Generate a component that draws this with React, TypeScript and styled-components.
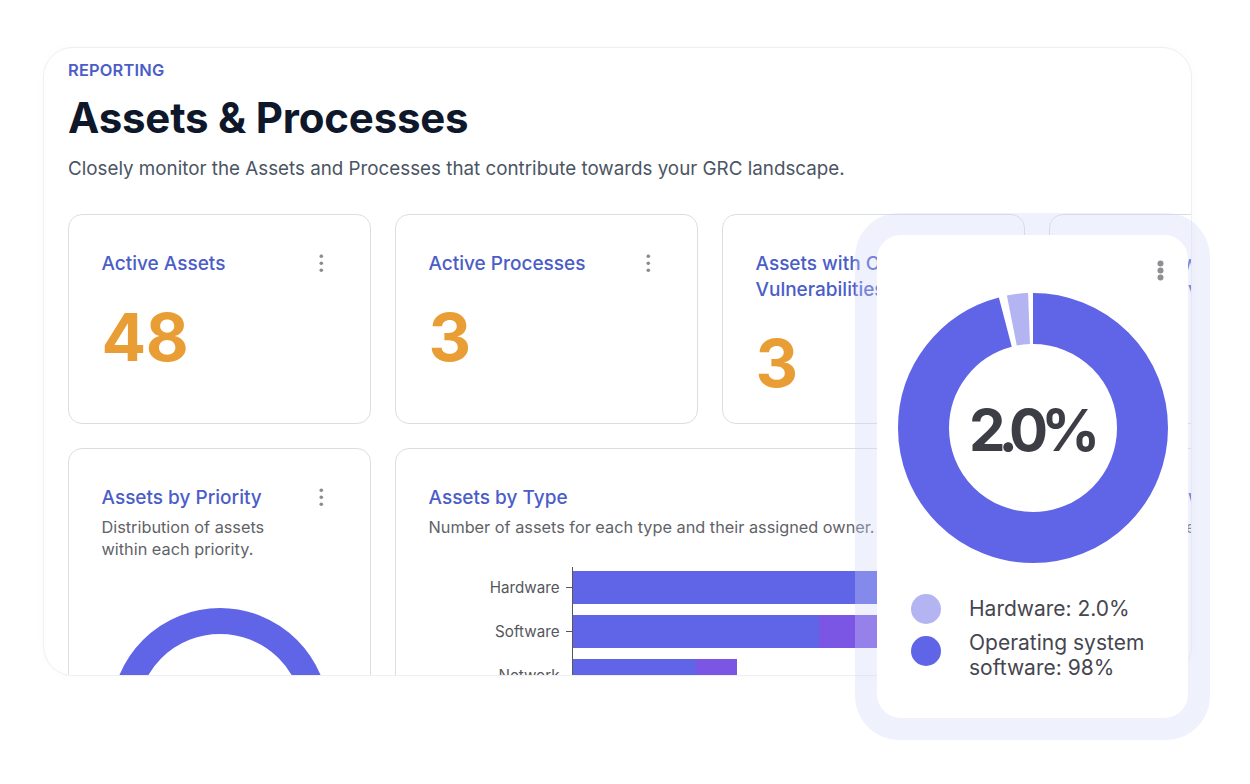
import React from "react";
import styled, { createGlobalStyle } from "styled-components";

const GlobalStyle = createGlobalStyle`
  html, body {
    margin: 0;
    padding: 0;
    background: #fff;
  }
  body {
    font-family: Inter, "Noto Sans", "Liberation Sans", sans-serif;
    -webkit-font-smoothing: antialiased;
  }
  * {
    box-sizing: border-box;
  }
`;

const INDIGO = "#6064e6";
const PURPLE = "#7b55e3";
const LIGHT = "#b3b4f1";

const Stage = styled.div`
  position: relative;
  width: 1250px;
  height: 784px;
  padding: 47px 0 0 43px;
  overflow: hidden;
`;

const Panel = styled.section`
  width: 1149px;
  height: 629px;
  border: 1px solid #efeff2;
  border-radius: 30px;
  background: #fff;
  box-shadow: 0 0 10px rgba(15, 23, 42, 0.025);
  padding: 12px 0 0 24px;
  overflow: hidden;
`;

const Eyebrow = styled.div`
  font-size: 16.4px;
  font-weight: 600;
  line-height: 20px;
  color: #4b5dc8;
  letter-spacing: 0.2px;
`;

const Heading = styled.h1`
  margin: 13px 0 0;
  font-size: 42px;
  font-weight: 700;
  line-height: 50px;
  color: #0f172a;
  letter-spacing: -0.2px;
`;

const Lead = styled.p`
  margin: 13px 0 0;
  font-size: 18.8px;
  line-height: 26px;
  color: #4b5563;
`;

const CardRow = styled.div<{ $top: number }>`
  display: flex;
  gap: 24px;
  margin-top: ${(p) => p.$top}px;
`;

const Card = styled.div<{ $w: number; $h: number }>`
  flex: 0 0 ${(p) => p.$w}px;
  min-width: 0;
  height: ${(p) => p.$h}px;
  border: 1.5px solid #dcdde1;
  border-radius: 14px;
  background: #fff;
  padding: 36px 46px 0 32.5px;
`;

const CardHead = styled.div`
  display: flex;
  justify-content: space-between;
  align-items: flex-start;
`;

const CardTitle = styled.h3`
  margin: 0;
  max-width: 200px;
  font-size: 19px;
  font-weight: 500;
  line-height: 26px;
  color: #4b5dc8;
`;

const Big = styled.div`
  margin-top: 27px;
  font-size: 66px;
  font-weight: 700;
  line-height: 66px;
  color: #e99d35;
  letter-spacing: -0.5px;
`;

const Desc = styled.p<{ $max?: number }>`
  margin: 5px 0 0;
  max-width: ${(p) => (p.$max ? `${p.$max}px` : "none")};
  font-size: 16.3px;
  line-height: 22px;
  color: #5f6368;
  white-space: ${(p) => (p.$max ? "normal" : "nowrap")};
`;

const DotsSvg = styled.svg`
  flex: 0 0 auto;
  display: block;
`;

function Kebab({ size = 1.8, gap = 7, color = "#8a8a8f", top = 3 }) {
  const w = size * 2 + 1;
  const h = gap * 2 + size * 2 + 1;
  return (
    <DotsSvg width={w} height={h} style={{ marginTop: top }} viewBox={`0 0 ${w} ${h}`}>
      {[0, 1, 2].map((i) => (
        <circle key={i} cx={w / 2} cy={size + 0.5 + i * gap} r={size} fill={color} />
      ))}
    </DotsSvg>
  );
}

const RingSvg = styled.svg`
  display: block;
  margin: 47px 0 0 8px;
  overflow: visible;
`;

/* bar chart */
const Chart = styled.div`
  margin-top: 29px;
  display: flex;
`;

const LabelCol = styled.div`
  flex: 0 0 143px;
  padding-top: 4px;
`;

const LabelRow = styled.div`
  height: 33px;
  margin-bottom: 11px;
  display: flex;
  justify-content: flex-end;
  align-items: center;
  gap: 6px;
  font-size: 15.2px;
  color: #55575c;
`;

const Tick = styled.span`
  width: 6px;
  height: 1.5px;
  background: #55575c;
`;

const BarCol = styled.div`
  flex: 1 0 auto;
  border-left: 1.5px solid #55575c;
  padding-top: 4px;
  height: 200px;
`;

const BarRow = styled.div`
  height: 33px;
  margin-bottom: 11px;
  display: flex;
`;

const Seg = styled.div<{ $c: string }>`
  flex: 0 0 auto;
  height: 100%;
  background: ${(p) => p.$c};
`;

/* popup over the page */
const Halo = styled.div`
  position: absolute;
  left: 855px;
  top: 213px;
  width: 355px;
  height: 527px;
  padding: 22px;
  border-radius: 44px;
  background: rgba(205, 215, 250, 0.33);
`;

const Popup = styled.div`
  height: 100%;
  background: #fff;
  border-radius: 24px;
  padding-top: 25px;
  display: flex;
  flex-direction: column;
`;

const PopupBar = styled.div`
  display: flex;
  justify-content: flex-end;
  padding-right: 24px;
`;

const DonutSvg = styled.svg`
  display: block;
  align-self: center;
  margin-top: 12px;
`;

const CenterText = styled.text`
  font-size: 58px;
  font-weight: 700;
  letter-spacing: -7px;
  fill: #3d3d46;
`;

const Legend = styled.div`
  margin-top: 33px;
  padding-left: 34px;
  display: flex;
  flex-direction: column;
  gap: 6px;
`;

const LegendItem = styled.div`
  display: flex;
  align-items: flex-start;
  gap: 28px;
`;

const LegendDot = styled.span<{ $c: string; $dy: number }>`
  flex: 0 0 30px;
  height: 30px;
  margin-top: ${(p) => p.$dy}px;
  border-radius: 50%;
  background: ${(p) => p.$c};
`;

const LegendText = styled.span`
  font-size: 21px;
  line-height: 25px;
  color: #46464f;
`;

const stats = [
  { title: "Active Assets", value: "48" },
  { title: "Active Processes", value: "3" },
  { title: "Assets with Open Vulnerabilities", value: "3" },
  { title: "Processes with Overdue Reviews", value: "1" },
];

const bars = [
  { label: "Hardware", segs: [[420, INDIGO]] },
  { label: "Software", segs: [[246, INDIGO], [120, PURPLE]] },
  { label: "Network", segs: [[123, INDIGO], [41, PURPLE]] },
  { label: "Cloud", segs: [[80, INDIGO]] },
] as const;

function Donut() {
  const r = 109.5;
  const c = 2 * Math.PI * r;
  const deg = (d: number) => (c * d) / 360;
  return (
    <DonutSvg width={270} height={270} viewBox="0 0 270 270">
      <g transform="rotate(-90 135 135)">
        <circle
          cx={135}
          cy={135}
          r={r}
          fill="none"
          stroke={INDIGO}
          strokeWidth={51}
          strokeDasharray={`${deg(345)} ${c}`}
        />
        <circle
          cx={135}
          cy={135}
          r={r}
          fill="none"
          stroke={LIGHT}
          strokeWidth={51}
          strokeDasharray={`${deg(9)} ${c}`}
          strokeDashoffset={-deg(348.5)}
        />
      </g>
      <CenterText x={133} y={137} textAnchor="middle" dominantBaseline="central">
        2.0%
      </CenterText>
    </DonutSvg>
  );
}

export default function App() {
  return (
    <>
      <GlobalStyle />
      <Stage>
        <Panel>
          <Eyebrow>REPORTING</Eyebrow>
          <Heading>Assets &amp; Processes</Heading>
          <Lead>
            Closely monitor the Assets and Processes that contribute towards your GRC landscape.
          </Lead>

          <CardRow $top={32}>
            {stats.map((s) => (
              <Card key={s.title} $w={303} $h={210}>
                <CardHead>
                  <CardTitle>{s.title}</CardTitle>
                  <Kebab />
                </CardHead>
                <Big>{s.value}</Big>
              </Card>
            ))}
          </CardRow>

          <CardRow $top={24}>
            <Card $w={303} $h={300}>
              <CardHead>
                <CardTitle>Assets by Priority</CardTitle>
                <Kebab />
              </CardHead>
              <Desc $max={185}>Distribution of assets within each priority.</Desc>
              <RingSvg width={220} height={220} viewBox="0 0 220 220">
                <circle cx={110} cy={110} r={96} fill="none" stroke={INDIGO} strokeWidth={26} />
              </RingSvg>
            </Card>

            <Card $w={627} $h={300}>
              <CardHead>
                <CardTitle>Assets by Type</CardTitle>
              </CardHead>
              <Desc>Number of assets for each type and their assigned owner.</Desc>
              <Chart>
                <LabelCol>
                  {bars.map((b) => (
                    <LabelRow key={b.label}>
                      {b.label}
                      <Tick />
                    </LabelRow>
                  ))}
                </LabelCol>
                <BarCol>
                  {bars.map((b) => (
                    <BarRow key={b.label}>
                      {b.segs.map(([w, c], i) => (
                        <Seg key={i} $c={c} style={{ width: w }} />
                      ))}
                    </BarRow>
                  ))}
                </BarCol>
              </Chart>
            </Card>

            <Card $w={303} $h={300}>
              <CardHead>
                <CardTitle>Assets by Owner</CardTitle>
                <Kebab />
              </CardHead>
              <Desc $max={200}>Assets assigned to each owner.</Desc>
            </Card>
          </CardRow>
        </Panel>

        <Halo>
          <Popup>
            <PopupBar>
              <Kebab size={3} gap={7} color="#8e8e93" top={0} />
            </PopupBar>
            <Donut />
            <Legend>
              <LegendItem>
                <LegendDot $c={LIGHT} $dy={-2.5} />
                <LegendText>Hardware: 2.0%</LegendText>
              </LegendItem>
              <LegendItem>
                <LegendDot $c={INDIGO} $dy={6.5} />
                <LegendText>
                  Operating system
                  <br />
                  software: 98%
                </LegendText>
              </LegendItem>
            </Legend>
          </Popup>
        </Halo>
      </Stage>
    </>
  );
}
